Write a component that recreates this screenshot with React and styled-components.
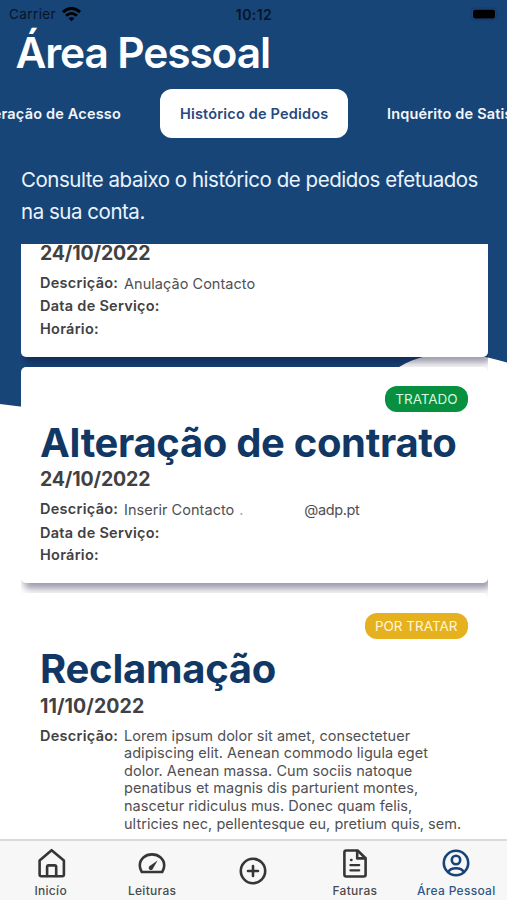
import React from "react";
import styled, { createGlobalStyle } from "styled-components";

const GlobalStyle = createGlobalStyle`
  * { box-sizing: border-box; }
  body { margin: 0; background: #fff; }
  h1, h2, p { margin: 0; }
`;

const Screen = styled.main`
  position: relative;
  display: flex;
  flex-direction: column;
  width: 507px;
  height: 900px;
  overflow: hidden;
  background: #fff;
  font-family: Inter, "Liberation Sans", sans-serif;
  white-space: nowrap;
`;

const Backdrop = styled.svg`
  position: absolute;
  inset: 0;
`;

const StatusBar = styled.div`
  position: relative;
  display: grid;
  grid-template-columns: 1fr auto 1fr;
  align-items: center;
  height: 28px;
  padding: 0 7px 0 8px;
  font-size: 13.5px;
  color: #071426;
`;

const Carrier = styled.span`
  display: flex;
  align-items: center;
  gap: 6px;
  padding-left: 1px;
  letter-spacing: 0.4px;
`;

const Clock = styled.span`
  font-size: 14px;
  font-weight: 600;
  letter-spacing: 0.4px;
`;

const BatteryIcon = styled.svg`
  justify-self: end;
`;

const PageTitle = styled.h1`
  position: relative;
  height: 52px;
  padding-left: 15.5px;
  font-size: 42.5px;
  line-height: 50px;
  font-weight: 600;
  letter-spacing: -1.15px;
  color: #fff;
`;

const Tabs = styled.nav`
  position: relative;
  display: grid;
  grid-template-columns: 141px 188px 140px;
  column-gap: 19px;
  height: 49px;
  margin-top: 9px;
`;

const Tab = styled.div`
  justify-self: ${(p) => p.$align || "stretch"};
  padding: 0 20px;
  border-radius: 12px;
  background: ${(p) => (p.$active ? "#fff" : "transparent")};
  color: ${(p) => (p.$active ? "#28497d" : "#f2f7fc")};
  font-size: 14.5px;
  line-height: 49px;
  font-weight: 600;
  letter-spacing: 0.18px;
`;

const Intro = styled.p`
  position: relative;
  height: 105.5px;
  padding: 26px 0 0 21px;
  font-size: 20.5px;
  line-height: 32px;
  letter-spacing: -0.47px;
  color: #e9f4ff;
`;

const List = styled.section`
  position: relative;
  flex: 1;
  width: 467px;
  margin-left: 20.5px;
  overflow: hidden;
`;

const Cards = styled.div`
  display: flex;
  flex-direction: column;
  gap: 10px;
  margin-top: -103.5px;
`;

const CardBox = styled.article`
  height: ${(p) => p.$height || 216.5}px;
  padding: 19.6px 20px 0 19.5px;
  border-radius: 5px;
  background: #fff;
  box-shadow: 3px 6px 7px rgba(12, 10, 50, 0.4);
`;

const Badge = styled.div`
  width: fit-content;
  height: 26px;
  margin-left: auto;
  padding: 0 10px;
  border-radius: 12px;
  background: ${(p) => p.$color};
  color: ${(p) => p.$ink};
  font-size: 13.5px;
  line-height: 26px;
  letter-spacing: ${(p) => p.$spacing};
`;

const CardTitle = styled.h2`
  margin-top: 5.8px;
  font-size: 40px;
  line-height: 49px;
  font-weight: 700;
  letter-spacing: ${(p) => p.$spacing};
  color: #113765;
`;

const CardDate = styled.p`
  margin-top: 0.4px;
  font-size: 19.5px;
  line-height: 24px;
  font-weight: 650;
  letter-spacing: ${(p) => p.$spacing || "-0.15px"};
  color: #414143;
`;

const Fields = styled.div`
  display: flex;
  flex-direction: column;
  gap: 5px;
  margin-top: 8.8px;
`;

const Field = styled.div`
  display: grid;
  grid-template-columns: 84px 1fr;
  font-size: 14.5px;
  line-height: 17.6px;
  color: #505052;
`;

const FieldName = styled.span`
  font-weight: 600;
  letter-spacing: 0.27px;
  color: #414143;
`;

const FieldValue = styled.span`
  white-space: pre;
  letter-spacing: 0.04px;
  padding-top: ${(p) => p.$drop || 0}px;
`;

const Redaction = styled.span`
  display: inline-block;
  width: 70px;
  padding-left: 5px;
  color: #aaa;
`;

const MailDomain = styled.span`
  letter-spacing: -0.4px;
`;

const TabBar = styled.footer`
  position: relative;
  display: grid;
  grid-template-columns: repeat(5, 1fr);
  height: 61px;
  border-top: 2px solid #d9d9da;
  background: #f7f7f8;
`;

const TabItem = styled.div`
  display: flex;
  flex-direction: column;
  align-items: center;
  padding-top: ${(p) => (p.$plain ? 13.5 : 6)}px;
  color: ${(p) => (p.$active ? "#174579" : "#363637")};
`;

const TabLabel = styled.span`
  margin-top: 4px;
  font-size: 12px;
  line-height: 15px;
  font-weight: 500;
  letter-spacing: 0.3px;
  color: ${(p) => (p.$active ? "#315787" : "#4b4b4c")};
`;

const Icon = ({ children }) => (
  <svg width="32" height="32" viewBox="0 0 32 32" fill="none" stroke="currentColor" strokeWidth="2.6" strokeLinejoin="round" strokeLinecap="round">
    {children}
  </svg>
);

const HomeIcon = () => (
  <Icon>
    <path d="M4.6 13.6 16.6 3.2 28.9 13.6V27.6Q28.9 29.2 27.3 29.2H6.2Q4.6 29.2 4.6 27.6Z" />
    <path d="M12.1 29V20Q12.1 18.4 13.7 18.4H19.6Q21.2 18.4 21.2 20V29" />
  </Icon>
);

const GaugeIcon = () => (
  <Icon>
    <path d="M5.8 25C4.5 23.1 3.8 20.8 3.8 18.6C3.8 12 9.3 7.4 16 7.4S28.2 12 28.2 18.6C28.2 20.8 27.5 23.1 26.2 25Z" />
    <path d="M21.6 13.4 14 18.8A2.2 2.2 0 1 0 17 21.4Z" fill="currentColor" stroke="none" />
  </Icon>
);

const PlusIcon = () => (
  <Icon>
    <circle cx="16" cy="16" r="12.2" />
    <path d="M16 11v10M11 16h10" />
  </Icon>
);

const InvoiceIcon = () => (
  <Icon>
    <path d="M7 3.5H18.6L26.6 11.3V27.6Q26.6 29.5 24.7 29.5H7.3Q5.4 29.5 5.4 27.6V5.4Q5.4 3.5 7.3 3.5Z" />
    <path d="M18.2 4V11.4H26.2" />
    <path d="M11.4 18.1H20.2M11.4 23.3H20.2M12 13h.6" strokeWidth="2.3" />
  </Icon>
);

const PersonIcon = () => (
  <Icon>
    <circle cx="16" cy="16" r="12.2" />
    <circle cx="16" cy="13" r="4.2" />
    <path d="M8.2 25C9.8 22.1 12.4 21.2 16 21.2S22.2 22.1 23.8 25" />
  </Icon>
);

const WifiIcon = () => (
  <svg width="19" height="15" viewBox="0 0 19 15" fill="none" stroke="#000" strokeWidth="2.9">
    <path d="M1 5.1C6 .3 13 .3 18 5.1" />
    <path d="M4.1 8.8C7.3 5.8 11.7 5.8 14.9 8.8" />
    <path d="M9.5 14.2 6.5 11.3C8.3 9.8 10.7 9.8 12.5 11.3Z" fill="#000" stroke="none" />
  </svg>
);

const statusColors = {
  TRATADO: { $color: "#07903f", $ink: "#d7f7df", $spacing: "-0.05px" },
  "POR TRATAR": { $color: "#e6b11e", $ink: "#fff7d7", $spacing: "0px" },
};

const Card = ({ status, title, titleSpacing, date, dateSpacing, height, children }) => (
  <CardBox $height={height}>
    <Badge {...statusColors[status]}>{status}</Badge>
    <CardTitle $spacing={titleSpacing}>{title}</CardTitle>
    <CardDate $spacing={dateSpacing}>{date}</CardDate>
    <Fields>{children}</Fields>
  </CardBox>
);

const ServiceFields = () => (
  <>
    <Field><FieldName>Data de Serviço:</FieldName></Field>
    <Field><FieldName>Horário:</FieldName></Field>
  </>
);

const lorem = `Lorem ipsum dolor sit amet, consectetuer
adipiscing elit. Aenean commodo ligula eget
dolor. Aenean massa. Cum sociis natoque
penatibus et magnis dis parturient montes,
nascetur ridiculus mus. Donec quam felis,
ultricies nec, pellentesque eu, pretium quis, sem.`;

export default function App() {
  return (
    <Screen>
      <GlobalStyle />
      <Backdrop width="507" height="420" viewBox="0 0 507 420">
        <path d="M0 0H507V362.5Q489 357.5 475 354.5C450 350 420 354 400 366.5C330 405 180 426 20 406.5L0 404Z" fill="#184578" />
      </Backdrop>
      <StatusBar>
        <Carrier>Carrier <WifiIcon /></Carrier>
        <Clock>10:12</Clock>
        <BatteryIcon width="30" height="14" viewBox="0 0 30 14">
          <rect x="1" y="1" width="25.5" height="12" rx="4" fill="none" stroke="#153c6a" />
          <rect x="3" y="2.8" width="22" height="8.6" rx="2.2" fill="#000" />
          <path d="M27.8 5.2Q29.6 7 27.8 8.8Z" fill="#153c6a" />
        </BatteryIcon>
      </StatusBar>
      <PageTitle>Área Pessoal</PageTitle>
      <Tabs>
        <Tab $align="end">Alteração de Acesso</Tab>
        <Tab $active>Histórico de Pedidos</Tab>
        <Tab $align="start">Inquérito de Satisfação</Tab>
      </Tabs>
      <Intro>
        Consulte abaixo o histórico de pedidos efetuados
        <br />
        na sua conta.
      </Intro>
      <List>
        <Cards>
          <Card status="TRATADO" title="Alteração de contrato" titleSpacing="-0.33px" date="24/10/2022">
            <Field>
              <FieldName>Descrição:</FieldName>
              <FieldValue $drop={1}>Anulação Contacto</FieldValue>
            </Field>
            <ServiceFields />
          </Card>
          <Card status="TRATADO" title="Alteração de contrato" titleSpacing="-0.33px" date="24/10/2022">
            <Field>
              <FieldName>Descrição:</FieldName>
              <FieldValue $drop={1}>
                Inserir Contacto<Redaction>.</Redaction><MailDomain>@adp.pt</MailDomain>
              </FieldValue>
            </Field>
            <ServiceFields />
          </Card>
          <Card status="POR TRATAR" title="Reclamação" titleSpacing="-0.25px" date="11/10/2022" dateSpacing="0.08px" height={330}>
            <Field>
              <FieldName>Descrição:</FieldName>
              <FieldValue>{lorem}</FieldValue>
            </Field>
            <ServiceFields />
          </Card>
        </Cards>
      </List>
      <TabBar>
        <TabItem><HomeIcon /><TabLabel>Inicío</TabLabel></TabItem>
        <TabItem><GaugeIcon /><TabLabel>Leituras</TabLabel></TabItem>
        <TabItem $plain><PlusIcon /></TabItem>
        <TabItem><InvoiceIcon /><TabLabel>Faturas</TabLabel></TabItem>
        <TabItem $active><PersonIcon /><TabLabel $active>Área Pessoal</TabLabel></TabItem>
      </TabBar>
    </Screen>
  );
}
